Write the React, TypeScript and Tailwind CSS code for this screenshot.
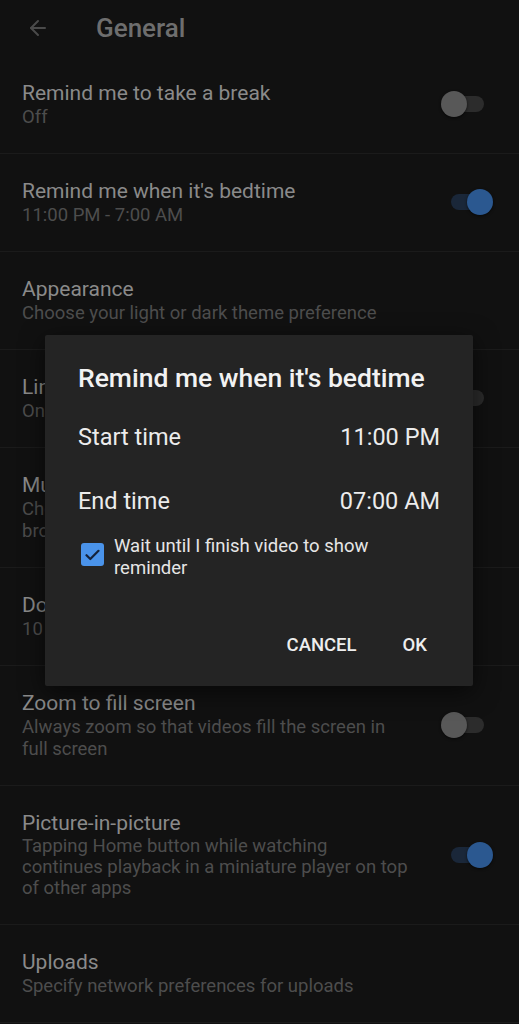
import { ArrowLeft } from 'lucide-react';

interface RowProps {
  title: string;
  subtitle: string;
  toggle?: 'on' | 'off';
  tight?: boolean;
}

const Toggle = ({ on }: { on: boolean }) => {
  return (
    <div className="relative w-[52px] h-[26px] shrink-0">
      {on ? (
        <>
          <div className="absolute left-[10px] top-[5px] w-[32px] h-[16px] rounded-full bg-[#1a2739]" />
          <div className="absolute left-[26px] top-0 w-[26px] h-[26px] rounded-full bg-[#2b5890] shadow-[0_1px_3px_rgba(0,0,0,0.6)]" />
        </>
      ) : (
        <>
          <div className="absolute left-[9px] top-[5px] w-[34px] h-[16px] rounded-full bg-[#2c2c2c]" />
          <div className="absolute left-0 top-0 w-[26px] h-[26px] rounded-full bg-[#585858] shadow-[0_1px_3px_rgba(0,0,0,0.6)]" />
        </>
      )}
    </div>
  );
};

const SettingRow = ({ title, subtitle, toggle, tight }: RowProps) => {
  return (
    <div className="flex items-center justify-between pl-[22px] pr-[26px] pt-[24px] pb-[25px] border-b border-[#1b1b1b]">
      <div className="w-[391px]">
        <div className="text-[21px] leading-[26px] text-[#8a8a8a]">{title}</div>
        <div
          className={
            tight
              ? 'text-[18.5px] leading-[21px] text-[#4d4d4d] whitespace-pre-line'
              : 'text-[18.5px] leading-[22px] text-[#4d4d4d] whitespace-pre-line'
          }
        >
          {subtitle}
        </div>
      </div>
      {toggle && <Toggle on={toggle === 'on'} />}
    </div>
  );
};

const rows: RowProps[] = [
  { title: 'Remind me to take a break', subtitle: 'Off', toggle: 'off' },
  { title: "Remind me when it's bedtime", subtitle: '11:00 PM - 7:00 AM', toggle: 'on' },
  { title: 'Appearance', subtitle: 'Choose your light or dark theme preference' },
  { title: 'Limit mobile data usage', subtitle: 'Only stream HD video on Wi-Fi', toggle: 'off' },
  { title: 'Muted playback in feeds', subtitle: 'Choose whether videos play muted when browsing feeds' },
  { title: 'Double-tap to seek', subtitle: '10 seconds' },
  { title: 'Zoom to fill screen', subtitle: 'Always zoom so that videos fill the screen in full screen', toggle: 'off' },
  {
    title: 'Picture-in-picture',
    subtitle: 'Tapping Home button while watching\ncontinues playback in a miniature player on top of other apps',
    toggle: 'on',
    tight: true,
  },
  { title: 'Uploads', subtitle: 'Specify network preferences for uploads' },
];

const BedtimeDialog = () => {
  return (
    <div className="absolute left-[45px] top-[335px] w-[428px] h-[351px] bg-[#242424] rounded-[2px] shadow-[0_6px_24px_rgba(0,0,0,0.6)] px-[33px] pt-[27px] flex flex-col">
      <div className="text-[26.5px] leading-[32px] font-medium text-[#f2f2f2] whitespace-nowrap">Remind me when it's bedtime</div>
      <div className="mt-[12px] h-[64px] flex items-center justify-between text-[23.5px] text-[#ececec]">
        <span>Start time</span>
        <span>11:00 PM</span>
      </div>
      <div className="h-[63px] flex items-center justify-between text-[23.5px] text-[#ececec]">
        <span>End time</span>
        <span>07:00 AM</span>
      </div>
      <div className="mt-[2px] flex items-start gap-[10px] ml-[3px]">
        <div className="mt-[8px] w-[23px] h-[23px] rounded-[3px] bg-[#4a93ea] flex items-center justify-center shrink-0">
          <svg width="15" height="12" viewBox="0 0 15 12" fill="none">
            <path d="M1.5 6.2 L5.3 10 L13.5 1.8" stroke="#14223a" strokeWidth="2.2" strokeLinecap="round" strokeLinejoin="round" />
          </svg>
        </div>
        <div className="w-[290px] text-[18.5px] leading-[22px] text-[#e6e6e6]">
          Wait until I finish video to show reminder
        </div>
      </div>
      <div className="mt-auto mb-[20px] h-[40px] flex items-center justify-end gap-[46px] pr-[13px] text-[18.5px] font-medium text-[#eeeeee]">
        <span>CANCEL</span>
        <span>OK</span>
      </div>
    </div>
  );
};

export default function App() {
  return (
    <div className="relative w-full min-h-screen bg-[#111111] overflow-hidden" style={{ fontFamily: 'Roboto, "Noto Sans", sans-serif' }}>
      <div className="h-[56px] flex items-center pl-[26px]">
        <ArrowLeft size={24} strokeWidth={2} className="text-[#4a4a4a]" />
        <span className="ml-[46px] text-[26px] font-medium text-[#6e6e6e]">General</span>
      </div>
      {rows.map((row, i) => (
        <SettingRow key={i} {...row} />
      ))}
      <BedtimeDialog />
    </div>
  );
}
